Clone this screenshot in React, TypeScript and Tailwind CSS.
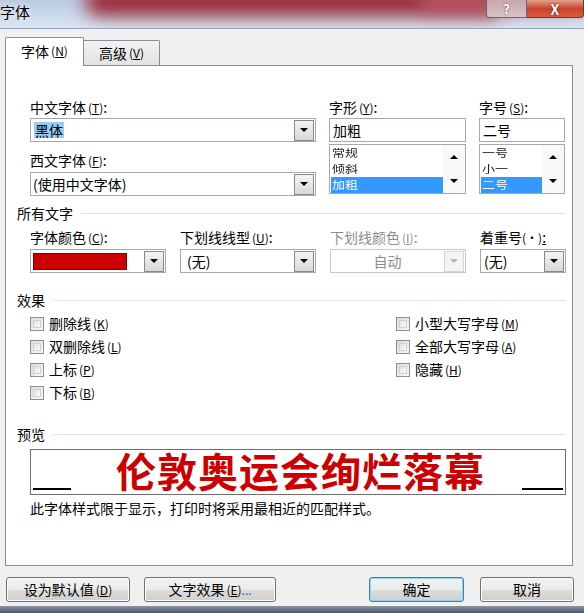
import type { ReactNode } from "react";

const Acc = ({ k }: { k: string }) => (
	<span className="ml-[2px] text-[12px]">
		(<span className="underline">{k}</span>)
	</span>
);

const Arrow = ({ disabled = false }: { disabled?: boolean }) => (
	<div
		className={`w-0 h-0 border-l-[4px] border-r-[4px] border-t-[4px] border-l-transparent border-r-transparent ${
			disabled ? "border-t-[#b5b5b5]" : "border-t-black"
		}`}
	/>
);

const DropButton = ({ disabled = false }: { disabled?: boolean }) => (
	<div
		className={`ml-auto mr-[1px] h-[21px] w-[20px] flex items-center justify-center border ${
			disabled
				? "border-[#d5d5d5] bg-[#f4f4f4]"
				: "border-[#8a8a8a] bg-gradient-to-b from-[#f3f3f3] to-[#d9d9d9]"
		}`}
	>
		<Arrow disabled={disabled} />
	</div>
);

const Combo = ({
	children,
	disabled = false,
	className = "",
}: {
	children?: ReactNode;
	disabled?: boolean;
	className?: string;
}) => (
	<div
		className={`h-[24px] flex items-center border bg-white ${
			disabled ? "border-[#c9c9c9]" : "border-[#a5a8ae]"
		} ${className}`}
	>
		{children}
		<DropButton disabled={disabled} />
	</div>
);

const Label = ({
	text,
	k,
	gray = false,
}: {
	text: string;
	k: string;
	gray?: boolean;
}) => (
	<div
		className={`h-[16px] leading-[16px] whitespace-nowrap ${
			gray ? "text-[#8d8d8d]" : "text-black"
		}`}
	>
		{text}
		<Acc k={k} />:
	</div>
);

const SectionTitle = ({ text }: { text: string }) => (
	<div className="h-[16px] flex items-center gap-[8px] pr-[6px]">
		<span className="leading-[16px]">{text}</span>
		<div className="flex-1 h-px bg-[#dae3ee]" />
	</div>
);

// items are squeezed vertically, like the scaled-down list in the screenshot
const ListBox = ({ items, selected }: { items: string[]; selected: number }) => (
	<div className="mt-[2px] h-[50px] flex border border-[#a5a8ae] bg-white overflow-hidden">
		<div className="flex-1 pl-[1px] flex flex-col">
			{items.map((item, i) => (
				<div
					key={item}
					className={`h-[16px] flex items-center pl-[1px] overflow-hidden ${
						i === selected ? "bg-[#3399ff] text-white" : "text-[#222]"
					}`}
				>
					<span className="inline-block text-[13px] leading-[16px] scale-y-[0.8] origin-center">
						{item}
					</span>
				</div>
			))}
		</div>
		<div className="w-[22px] bg-[#f8f8f8] flex flex-col items-center justify-between py-[10px]">
			<div className="w-0 h-0 border-l-[4px] border-r-[4px] border-b-[4px] border-l-transparent border-r-transparent border-b-black" />
			<div className="w-0 h-0 border-l-[4px] border-r-[4px] border-t-[4px] border-l-transparent border-r-transparent border-t-black" />
		</div>
	</div>
);

const Check = ({ text, k }: { text: string; k: string }) => (
	<div className="h-[23px] flex items-center gap-[5px]">
		<div className="w-[14px] h-[14px] border border-[#8e8f8f] bg-gradient-to-br from-[#dcdcdc] to-[#f8f8f8] p-[2px]">
			<div className="w-full h-full border border-[#d0d0d0] bg-gradient-to-br from-[#e3e3e3] to-[#fafafa]" />
		</div>
		<span className="leading-[16px]">
			{text}
			<Acc k={k} />
		</span>
	</div>
);

const Button = ({
	children,
	className = "",
	focused = false,
}: {
	children: ReactNode;
	className?: string;
	focused?: boolean;
}) => (
	<div
		className={`h-[25px] flex items-center justify-center rounded-[3px] border ${
			focused
				? "border-[#3c7fb1] shadow-[inset_0_0_0_1px_#8fd3f5]"
				: "border-[#707070] shadow-[inset_0_0_0_1px_#fbfbfb]"
		} bg-[linear-gradient(to_bottom,#f2f2f2_0%,#ebebeb_50%,#dddddd_51%,#cfcfcf_100%)] ${className}`}
	>
		{children}
	</div>
);

export default function App() {
	return (
		<div
			className="w-[584px] h-[613px] bg-[#f0f0f0] flex flex-col overflow-hidden text-[14px] text-black"
			style={{ fontFamily: '"Noto Sans CJK SC", "Liberation Sans", sans-serif' }}
		>
			{/* title bar */}
			<div className="relative h-[29px] shrink-0 overflow-hidden bg-gradient-to-b from-[#b9cbe0] to-[#dae6f3] border-b border-[#97a6b8]">
				<div className="absolute left-[85px] right-[80px] -top-[12px] h-[28px] rounded-full bg-[#9a2533] blur-[9px]" />
				<div className="absolute left-[420px] right-0 -top-[8px] h-[22px] bg-[#c0606a] blur-[8px] opacity-70" />
				<div className="relative flex items-start h-full">
					<span className="mt-[3px] leading-[18px] text-[15px] [text-shadow:0_0_6px_#fff]">
						字体
					</span>
					<div className="ml-auto flex">
						<div className="w-[41px] h-[18px] flex items-center justify-center border border-t-0 border-[#5e6b7c] rounded-bl-[4px] bg-gradient-to-b from-[#c9a6ab] to-[#d8c3c8] text-white font-bold text-[13px] leading-none [text-shadow:0_0_2px_#333]">
							?
						</div>
						<div className="w-[57px] h-[18px] flex items-center justify-center border border-t-0 border-l-0 border-[#5e3a3a] rounded-br-[4px] bg-gradient-to-b from-[#e6a08c] via-[#c9432b] to-[#dd5a3e] text-white font-bold text-[14px] leading-none [text-shadow:0_0_2px_#300]">
							X
						</div>
					</div>
				</div>
			</div>

			{/* tabs */}
			<div className="mt-[8px] ml-[5px] flex items-end h-[28px] shrink-0">
				<div className="relative z-10 h-[29px] -mb-px w-[79px] border border-b-0 border-[#898c95] bg-white rounded-t-[2px] flex items-center justify-center pb-[2px]">
					字体
					<Acc k="N" />
				</div>
				<div className="h-[25px] w-[76px] border border-l-0 border-b-0 border-[#898c95] bg-gradient-to-b from-[#f2f2f2] to-[#e2e2e2] rounded-tr-[2px] flex items-center justify-center">
					高级
					<Acc k="V" />
				</div>
			</div>

			{/* panel */}
			<div className="ml-[5px] w-[568px] h-[501px] shrink-0 border border-[#898c95] bg-white pl-[11px] pt-[33px] flex flex-col">
				<div className="ml-[13px] flex">
					<div className="w-[286px]">
						<Label text="中文字体" k="T" />
						<Combo className="mt-[3px]">
							<span className="ml-[3px] px-[1px] bg-[#99cdf5] leading-[16px]">黑体</span>
						</Combo>
						<div className="mt-[10px]">
							<Label text="西文字体" k="F" />
						</div>
						<Combo className="mt-[4px]">
							<span className="ml-[2px] leading-[16px]">(使用中文字体)</span>
						</Combo>
					</div>
					<div className="w-[137px] ml-[13px]">
						<Label text="字形" k="Y" />
						<div className="mt-[3px] h-[24px] border border-[#a5a8ae] flex items-center pl-[3px]">
							加粗
						</div>
						<ListBox items={["常规", "倾斜", "加粗"]} selected={2} />
					</div>
					<div className="w-[86px] ml-[13px]">
						<Label text="字号" k="S" />
						<div className="mt-[3px] h-[24px] border border-[#a5a8ae] flex items-center pl-[3px]">
							二号
						</div>
						<ListBox items={["一号", "小一", "二号"]} selected={2} />
					</div>
				</div>

				<div className="mt-[9px]">
					<SectionTitle text="所有文字" />
				</div>
				<div className="ml-[13px] mt-[8px] flex gap-[14px]">
					<div className="w-[136px]">
						<Label text="字体颜色" k="C" />
						<Combo className="mt-[4px]">
							<div className="ml-[2px] h-[17px] w-[94px] bg-[#cc0000] border border-[#7a0000]" />
						</Combo>
					</div>
					<div className="w-[136px]">
						<Label text="下划线线型" k="U" />
						<Combo className="mt-[4px]">
							<span className="ml-[6px] leading-[16px]">(无)</span>
						</Combo>
					</div>
					<div className="w-[136px]">
						<Label text="下划线颜色" k="I" gray />
						<Combo className="mt-[4px]" disabled>
							<span className="flex-1 text-center text-[#8d8d8d] leading-[16px]">自动</span>
						</Combo>
					</div>
					<div className="w-[86px]">
						<div className="h-[16px] leading-[16px] whitespace-nowrap">
							着重号<span className="text-[12px]">(·)</span>
							<span className="underline">:</span>
						</div>
						<Combo className="mt-[4px]">
							<span className="ml-[3px] leading-[16px]">(无)</span>
						</Combo>
					</div>
				</div>

				<div className="mt-[19px]">
					<SectionTitle text="效果" />
				</div>
				<div className="ml-[13px] mt-[4px] grid grid-cols-[366px_1fr]">
					<div className="flex flex-col">
						<Check text="删除线" k="K" />
						<Check text="双删除线" k="L" />
						<Check text="上标" k="P" />
						<Check text="下标" k="B" />
					</div>
					<div className="flex flex-col">
						<Check text="小型大写字母" k="M" />
						<Check text="全部大写字母" k="A" />
						<Check text="隐藏" k="H" />
					</div>
				</div>

				<div className="mt-[22px]">
					<SectionTitle text="预览" />
				</div>
				<div className="ml-[13px] mt-[7px] w-[536px] h-[46px] border border-[#6e6e6e] bg-white flex items-end px-[2px] pb-[4px]">
					<div className="w-[38px] h-[2px] bg-black" />
					<div className="flex-1 self-center text-center text-[#cc0000] font-bold text-[40px] leading-[44px] tracking-[1px] -mr-[8px]">
						伦敦奥运会绚烂落幕
					</div>
					<div className="w-[41px] h-[2px] bg-black" />
				</div>
				<div className="ml-[13px] mt-[5px] h-[16px] leading-[16px] text-[14px]">
					此字体样式限于显示，打印时将采用最相近的匹配样式。
				</div>
			</div>

			{/* buttons */}
			<div className="mt-[11px] pl-[6px] flex shrink-0">
				<Button className="w-[124px]">
					设为默认值
					<Acc k="D" />
				</Button>
				<Button className="ml-[14px] w-[132px]">
					文字效果
					<Acc k="E" />
					<span className="text-[12px] text-[#555]">...</span>
				</Button>
				<Button className="ml-[93px] w-[95px]" focused>
					确定
				</Button>
				<Button className="ml-[16px] w-[94px]">取消</Button>
			</div>

			<div className="mt-auto h-[7px] shrink-0 bg-gradient-to-b from-[#8a96a6] to-[#4b5a6c]" />
		</div>
	);
}
